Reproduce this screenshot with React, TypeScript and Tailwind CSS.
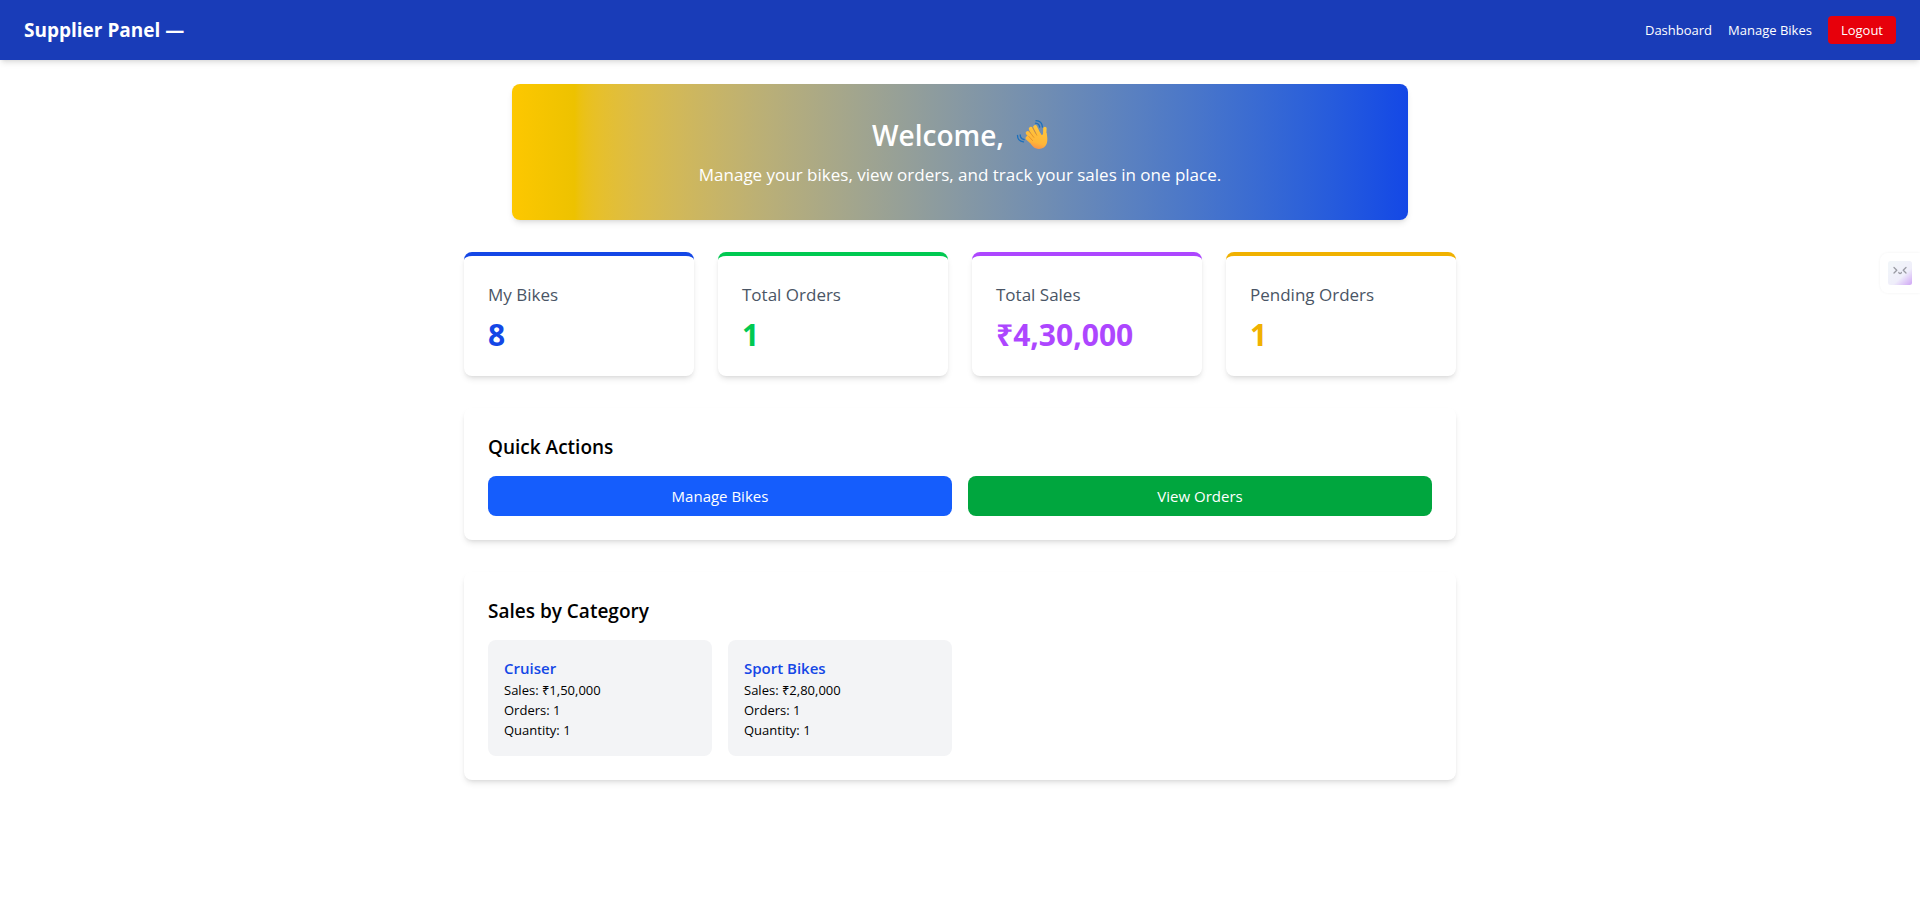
import React from "react";

const stats = [
  { label: "My Bikes", value: "8", border: "border-blue-700", text: "text-blue-700" },
  { label: "Total Orders", value: "1", border: "border-green-500", text: "text-green-500" },
  { label: "Total Sales", value: "₹4,30,000", border: "border-purple-500", text: "text-purple-500" },
  { label: "Pending Orders", value: "1", border: "border-yellow-500", text: "text-yellow-500" },
];

const categories = [
  { name: "Cruiser", sales: "₹1,50,000", orders: 1, quantity: 1 },
  { name: "Sport Bikes", sales: "₹2,80,000", orders: 1, quantity: 1 },
];

function WavingHand() {
  return (
    <svg viewBox="0 0 32 32" className="size-8" role="img" aria-label="Waving hand">
      <defs>
        <linearGradient id="skin" gradientUnits="userSpaceOnUse" x1="25" y1="6" x2="18" y2="31">
          <stop offset="0" stopColor="#ffc83d" />
          <stop offset="0.7" stopColor="#ffb638" />
          <stop offset="1" stopColor="#f9884e" />
        </linearGradient>
      </defs>
      <g fill="none" stroke="#1b70bd" strokeWidth="1.3" strokeLinecap="round">
        <path d="M20 1.700c3.600.2 6.200 2.600 6.400 6.300" />
        <path d="M19.500 4.200c2.300.2 3.900 1.600 4.200 3.900" />
        <path d="M1.500 16.300c0 3.500 2.200 6.200 6 6.600" />
        <path d="M4.200 16c.1 2.300 1.500 4 3.900 4.500" />
      </g>
      <g stroke="url(#skin)" strokeLinecap="round" fill="none">
        <path d="M23.500 17L19.200 8M19.500 19L14.800 9.800M18.500 22L11.700 14M18 25l-6.500-6" strokeWidth="4" />
        <path d="M28.500 20.500L28.900 9.500" strokeWidth="3.400" />
      </g>
      <path
        d="M18 15l6-1.500c1.200 2.700 2 3.200 3.100 1.400l3.500-1c.7 3.700 1.100 7 .3 10.200-1.100 4-4.700 6.100-8.400 5.900-3.300-.2-5.300-1.700-7.200-4.400z"
        fill="url(#skin)"
      />
      <path
        d="M13.200 12.300l4.600 6M16.800 8.900l4 7.300M12.800 17.400l3.700 4.100"
        fill="none"
        stroke="#df8a28"
        strokeWidth="0.800"
        strokeLinecap="round"
      />
    </svg>
  );
}

function AssistantFace() {
  return (
    <svg viewBox="0 0 24 24" className="size-6" aria-hidden="true">
      <defs>
        <linearGradient id="face" x1="0.2" y1="0.1" x2="1" y2="1">
          <stop offset="0" stopColor="#f1f5f9" />
          <stop offset="0.55" stopColor="#efeefa" />
          <stop offset="1" stopColor="#cfa4f5" />
        </linearGradient>
      </defs>
      <rect width="24" height="24" rx="2.5" fill="url(#face)" />
      <g fill="none" stroke="#9a9ba3" strokeWidth="1.300" strokeLinecap="round" strokeLinejoin="round">
        <path d="M6 6.500l2.800 2.700L6 12M18 6.500l-2.800 2.700L18 12" />
        <path d="M10.800 11.500c.2 1.300 2.400 1.300 2.600 0" />
      </g>
    </svg>
  );
}

export default function App() {
  return (
    <div className="min-h-screen bg-white font-['Open_Sans','Noto_Sans',sans-serif] text-black">
      <nav className="flex items-center justify-between bg-blue-800 px-6 py-4 text-white shadow-md">
        <h1 className="text-[19px] leading-7 font-bold">Supplier Panel —</h1>
        <div className="flex items-center gap-4 text-[13px] leading-5">
          <a href="#dashboard">Dashboard</a>
          <a href="#bikes">Manage Bikes</a>
          <button type="button" className="rounded-sm bg-red-600 px-[13px] py-1">Logout</button>
        </div>
      </nav>

      <main className="mx-auto flex max-w-5xl flex-col gap-8 px-4 py-6">
        <header className="mx-auto w-full max-w-4xl rounded-lg bg-linear-to-r from-yellow-400 via-[#edc200] via-7% to-blue-700 p-8 text-center text-white shadow-md">
          <h2 className="flex items-center justify-center gap-3 text-[28px] leading-[38px] font-semibold">
            Welcome, <WavingHand />
          </h2>
          <p className="mt-2 text-[17px] leading-[26px]">Manage your bikes, view orders, and track your sales in one place.</p>
        </header>

        <section className="grid grid-cols-1 gap-6 sm:grid-cols-2 lg:grid-cols-4">
          {stats.map((s) => (
            <div key={s.label} className={`rounded-lg border-t-4 bg-white p-6 shadow-md ${s.border}`}>
              <h3 className="text-[17px] leading-[30px] text-gray-600">{s.label}</h3>
              <p className={`mt-2 text-3xl leading-[34px] font-bold ${s.text}`}>{s.value}</p>
            </div>
          ))}
        </section>

        <section className="rounded-lg bg-white p-6 shadow-md">
          <h3 className="mb-3.5 text-[19px] leading-[30px] font-semibold">Quick Actions</h3>
          <div className="grid grid-cols-1 gap-4 text-[15px] leading-6 sm:grid-cols-2">
            <button type="button" className="rounded-lg bg-blue-600 px-4 py-2 text-white">Manage Bikes</button>
            <button type="button" className="rounded-lg bg-green-600 px-4 py-2 text-white">View Orders</button>
          </div>
        </section>

        <section className="rounded-lg bg-white p-6 shadow-md">
          <h3 className="mb-3.5 text-[19px] leading-[30px] font-semibold">Sales by Category</h3>
          <div className="grid grid-cols-1 gap-4 sm:grid-cols-2 lg:grid-cols-4">
            {categories.map((c) => (
              <div key={c.name} className="rounded-lg bg-gray-100 p-4 text-[13px] leading-5">
                <h4 className="text-[15px] leading-6 font-semibold text-blue-700">{c.name}</h4>
                <p>Sales: {c.sales}</p>
                <p>Orders: {c.orders}</p>
                <p>Quantity: {c.quantity}</p>
              </div>
            ))}
          </div>
        </section>
      </main>

      <button
        type="button"
        aria-label="Open assistant"
        className="fixed top-[253px] right-0 rounded-l-lg bg-white p-2 shadow-[0_0_3px_rgba(0,0,0,0.06)]"
      >
        <AssistantFace />
      </button>
    </div>
  );
}
